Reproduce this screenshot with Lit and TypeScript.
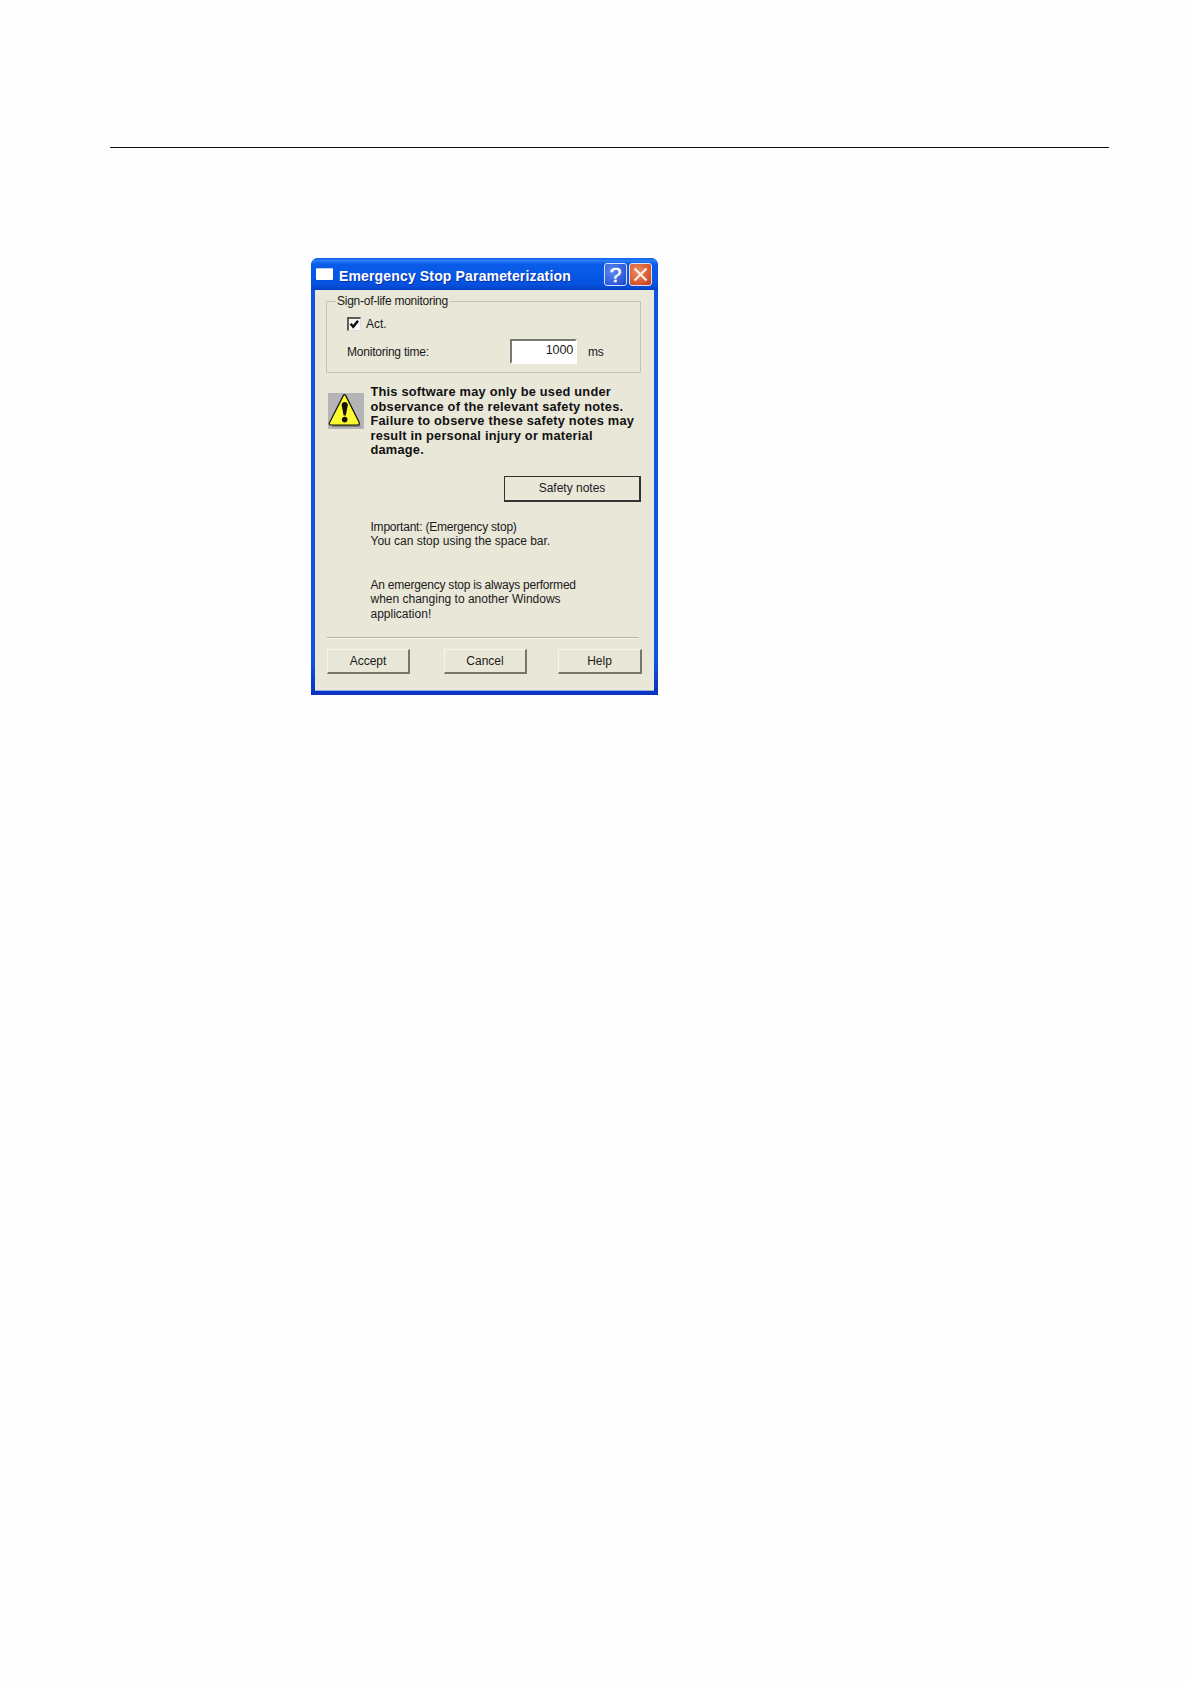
import { LitElement, html, css } from "lit";
import { customElement } from "lit/decorators.js";

@customElement("app-root")
export class AppRoot extends LitElement {
  static styles = css`
    :host { display: block; width: 1190px; height: 1684px; background: #fefefe; font-family: "Liberation Sans", Arial, sans-serif; color: #1a1a1a; overflow: hidden; }
    .page { padding-top: 147px; }
    .rule { height: 1px; margin-left: 110px; width: 999px; background: #111; }
    .dialog { box-sizing: border-box; margin: 110px 0 0 311px; width: 347px; height: 437px; display: flex; flex-direction: column; border-radius: 7px 7px 0 0; overflow: hidden; background: linear-gradient(180deg, #0f55e2 0%, #0f55e2 92%, #0a34c0 99%); }
    .title { height: 32px; flex: none; display: flex; align-items: center; padding: 0 6px 0 5px; background: linear-gradient(180deg, #0a5ff0 0%, #2a7cf5 8%, #0a5ce8 20%, #0558e6 60%, #0650dc 85%, #0340c4 100%); }
    .app-icon { width: 17px; height: 11px; background: #fff; border-top: 1px solid #b8d0f8; border-radius: 1px; flex: none; margin-top: 0; }
    .title-text { color: #fff; font-weight: 700; font-size: 14px; letter-spacing: 0.15px; margin-left: 6px; margin-top: 3px; flex: 1; text-shadow: 1px 1px 0 #0a2fa8; white-space: nowrap; }
    .cap { box-sizing: border-box; width: 23px; height: 23px; border: 1px solid #d6e2fa; border-radius: 3px; display: flex; align-items: center; justify-content: center; color: #fff; font-weight: 400; font-size: 21px; margin-left: 2px; margin-top: 1px; -webkit-text-stroke: 0.5px #fff; }
    .help-cap { background: radial-gradient(circle at 35% 35%, #5f8cf0, #2a55d8 75%, #1c3fb8); }
    .close-cap { background: radial-gradient(circle at 35% 35%, #ea8a60, #d9532a 70%, #b73a12); }
    .body { flex: 1; background: #e9e7d8; margin: 0 4px 4px; padding: 4px 0 0 12px; box-shadow: inset 0 -1px 0 #8fb0f0; font-size: 12px; line-height: 14.5px; letter-spacing: -0.22px; }
    fieldset { box-sizing: border-box; width: 315px; height: 79px; margin: 0 0 0 -1px; padding: 9px 0 0 20px; border: 1px solid #c5c3b4; border-radius: 1px; }
    legend { padding: 0 1px; margin-left: -11px; line-height: 14px; letter-spacing: -0.25px; white-space: nowrap; }
    .act { display: flex; align-items: center; height: 14px; letter-spacing: 0; }
    .check { box-sizing: border-box; width: 14px; height: 14px; background: #f8f8f4; border: 2px solid #5c5c58; border-right: 1px solid #ddd; border-bottom: 1px solid #ddd; display: flex; flex: none; margin-right: 5px; }
    .time { display: flex; align-items: center; margin-top: 8px; height: 25px; }
    .time-label { width: 163px; flex: none; padding-top: 2px; }
    .input { box-sizing: border-box; width: 67px; height: 25px; background: #fff; border: 2px solid #fff; border-top-color: #777; border-left-color: #777; text-align: right; padding: 0 2px 3px 0; line-height: 19px; font-size: 12.6px; letter-spacing: -0.2px; }
    .ms { margin-left: 11px; padding-top: 2px; }
    .warn { display: flex; margin: 12px 0 0 1px; }
    .warn-icon { flex: none; width: 36px; height: 36px; margin-top: 8px; }
    .warn-text { margin-left: 6.5px; font-weight: 700; font-size: 12.8px; line-height: 14.5px; letter-spacing: 0.22px; white-space: nowrap; color: #111; }
    .btn { box-sizing: border-box; display: flex; align-items: center; justify-content: center; background: #e9e7d8; border: 1px solid #f6f5ee; border-right: 2px solid #77766c; border-bottom: 2px solid #77766c; letter-spacing: 0; }
    .safety { width: 137px; height: 26px; margin: 18px 0 0 177px; border: 1px solid #333; border-right-width: 2px; border-bottom-width: 2px; }
    .note { margin: 18px 0 0 43.5px; white-space: nowrap; }
    .note + .note { margin-top: 29px; }
    .wide { letter-spacing: 0; }
    .sep { width: 312px; height: 1px; background: #b8b6a6; margin-top: 16px; border-bottom: 1px solid #f6f5ee; }
    .buttons { display: flex; margin-top: 10px; }
    .buttons .btn { width: 83px; height: 25px; }
    .buttons .cancel { margin-left: 34px; }
    .buttons .help { margin-left: 31px; width: 84px; }
  `;

  render() {
    return html`
      <div class="page">
        <div class="rule"></div>
        <div class="dialog">
          <div class="title">
            <div class="app-icon"></div>
            <div class="title-text">Emergency Stop Parameterization</div>
            <div class="cap help-cap">?</div>
            <div class="cap close-cap">
              <svg width="17" height="17" viewBox="0 0 17 17"><path d="M2.5 2.5 L14.5 14.5 M14.5 2.5 L2.5 14.5" stroke="#fdf0e8" stroke-width="2.4" fill="none"/></svg>
            </div>
          </div>
          <div class="body">
            <fieldset>
              <legend>Sign-of-life monitoring</legend>
              <div class="act">
                <span class="check">
                  <svg width="11" height="11" viewBox="0 0 11 11"><path d="M1.6 4.8 L4.2 7.8 L9 1.8" stroke="#111" stroke-width="2.5" fill="none"/></svg>
                </span>
                Act.
              </div>
              <div class="time">
                <span class="time-label">Monitoring time:</span>
                <span class="input">1000</span>
                <span class="ms">ms</span>
              </div>
            </fieldset>
            <div class="warn">
              <svg class="warn-icon" viewBox="0 0 36 36">
                <rect width="36" height="36" fill="#b4b4b6"/>
                <path d="M18 4 L33 34 L4 34 Z" fill="#55554c" opacity=".55"/>
                <path d="M15.4 2.4 C16 1.4 17 1.4 17.6 2.4 L31 29 C31.8 31 31 32 29.5 32 L3 32 C1.4 32 .8 31 1.6 29.4 Z" fill="#fbfb2e" stroke="#111" stroke-width="1.2"/>
                <path d="M13.6 12 C13.6 8 19.8 8 19.8 12 L17.8 22.5 L15.6 22.5 Z" fill="#111"/>
                <circle cx="16.7" cy="26.6" r="2.8" fill="#111"/>
              </svg>
              <div class="warn-text">This software may only be used under<br>observance of the relevant safety notes.<br>Failure to observe these safety notes may<br>result in personal injury or material<br>damage.</div>
            </div>
            <div class="btn safety">Safety notes</div>
            <div class="note">Important: (Emergency stop)<br><span class="wide">You can stop using the space bar.</span></div>
            <div class="note">An emergency stop is always performed<br><span class="wide">when changing to another Windows</span><br><span class="wide">application!</span></div>
            <div class="sep"></div>
            <div class="buttons">
              <div class="btn">Accept</div>
              <div class="btn cancel">Cancel</div>
              <div class="btn help">Help</div>
            </div>
          </div>
        </div>
      </div>
    `;
  }
}
